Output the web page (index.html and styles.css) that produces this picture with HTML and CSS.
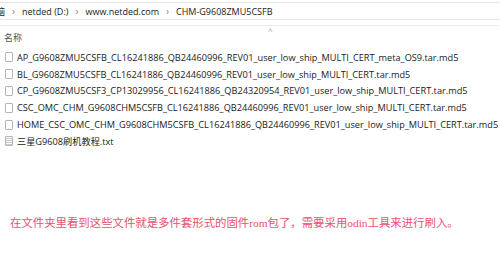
FILE: index.html
```html
<!DOCTYPE html>
<html lang="zh">
<head>
<meta charset="utf-8">
<link rel="stylesheet" href="styles.css">
</head>
<body>
<div class="address">
  <span class="crumb cut">脑</span>
  <span class="sep">&#x203A;</span>
  <span class="crumb">netded (D:)</span>
  <span class="sep">&#x203A;</span>
  <span class="crumb">www.netded.com</span>
  <span class="sep">&#x203A;</span>
  <span class="crumb">CHM-G9608ZMU5CSFB</span>
</div>
<div class="header">
  <span class="col-name">名称</span>
  <span class="caret">^</span>
</div>
<ul class="files">
  <li><span class="icon"></span>AP_G9608ZMU5CSFB_CL16241886_QB24460996_REV01_user_low_ship_MULTI_CERT_meta_OS9.tar.md5</li>
  <li><span class="icon"></span>BL_G9608ZMU5CSFB_CL16241886_QB24460996_REV01_user_low_ship_MULTI_CERT.tar.md5</li>
  <li><span class="icon"></span>CP_G9608ZMU5CSF3_CP13029956_CL16241886_QB24320954_REV01_user_low_ship_MULTI_CERT.tar.md5</li>
  <li><span class="icon"></span>CSC_OMC_CHM_G9608CHM5CSFB_CL16241886_QB24460996_REV01_user_low_ship_MULTI_CERT.tar.md5</li>
  <li><span class="icon"></span>HOME_CSC_OMC_CHM_G9608CHM5CSFB_CL16241886_QB24460996_REV01_user_low_ship_MULTI_CERT.tar.md5</li>
  <li><span class="icon txt"></span>三星G9608刷机教程.txt</li>
</ul>
<p class="note">在文件夹里看到这些文件就是多件套形式的固件rom包了，需要采用odin工具来进行刷入。</p>
</body>
</html>
```

FILE: styles.css
```css
html, body {
  margin: 0;
  padding: 0;
  background: #fff;
}
body {
  width: 500px;
  height: 274px;
  overflow: hidden;
  font-family: "Open Sans", "Noto Sans CJK SC", sans-serif;
  color: #1a1a1a;
}
.address {
  margin-top: 2px;
  height: 16px;
  border-top: 1px solid #e6e6e6;
  border-bottom: 1px solid #e6e6e6;
  display: flex;
  align-items: center;
  font-size: 9px;
  white-space: nowrap;
  overflow: hidden;
}
.crumb.cut {
  margin-left: -4px;
}
.sep {
  color: #888;
  margin: 0 7px;
  font-size: 10px;
}
.header {
  margin-top: 5px;
  height: 19px;
  border-top: 1px solid #ececec;
  position: relative;
  display: flex;
  align-items: center;
  font-size: 9px;
  color: #555;
}
.col-name {
  margin-left: 4px;
  padding-top: 4px;
}
.caret {
  position: absolute;
  left: 268px;
  top: -1px;
  font-size: 8px;
  color: #999;
}
.files {
  list-style: none;
  margin: 4px 0 0;
  padding: 0;
  font-size: 9.2px;
}
.files li {
  height: 16.8px;
  display: flex;
  align-items: center;
  white-space: nowrap;
}
.icon {
  flex-shrink: 0;
  width: 8px;
  height: 10px;
  border: 1px solid #b5b5b5;
  border-radius: 1px;
  margin: 0 4px 0 5px;
  box-sizing: border-box;
  background: #fff;
}
.icon.txt {
  background: repeating-linear-gradient(#fff 0 1px, #c8c8c8 1px 2px);
}
.note {
  margin: 64px 0 0 10px;
  font-family: "Liberation Serif", "Noto Sans CJK SC", serif;
  font-size: 11.4px;
  color: #e8506e;
  white-space: nowrap;
}
```
